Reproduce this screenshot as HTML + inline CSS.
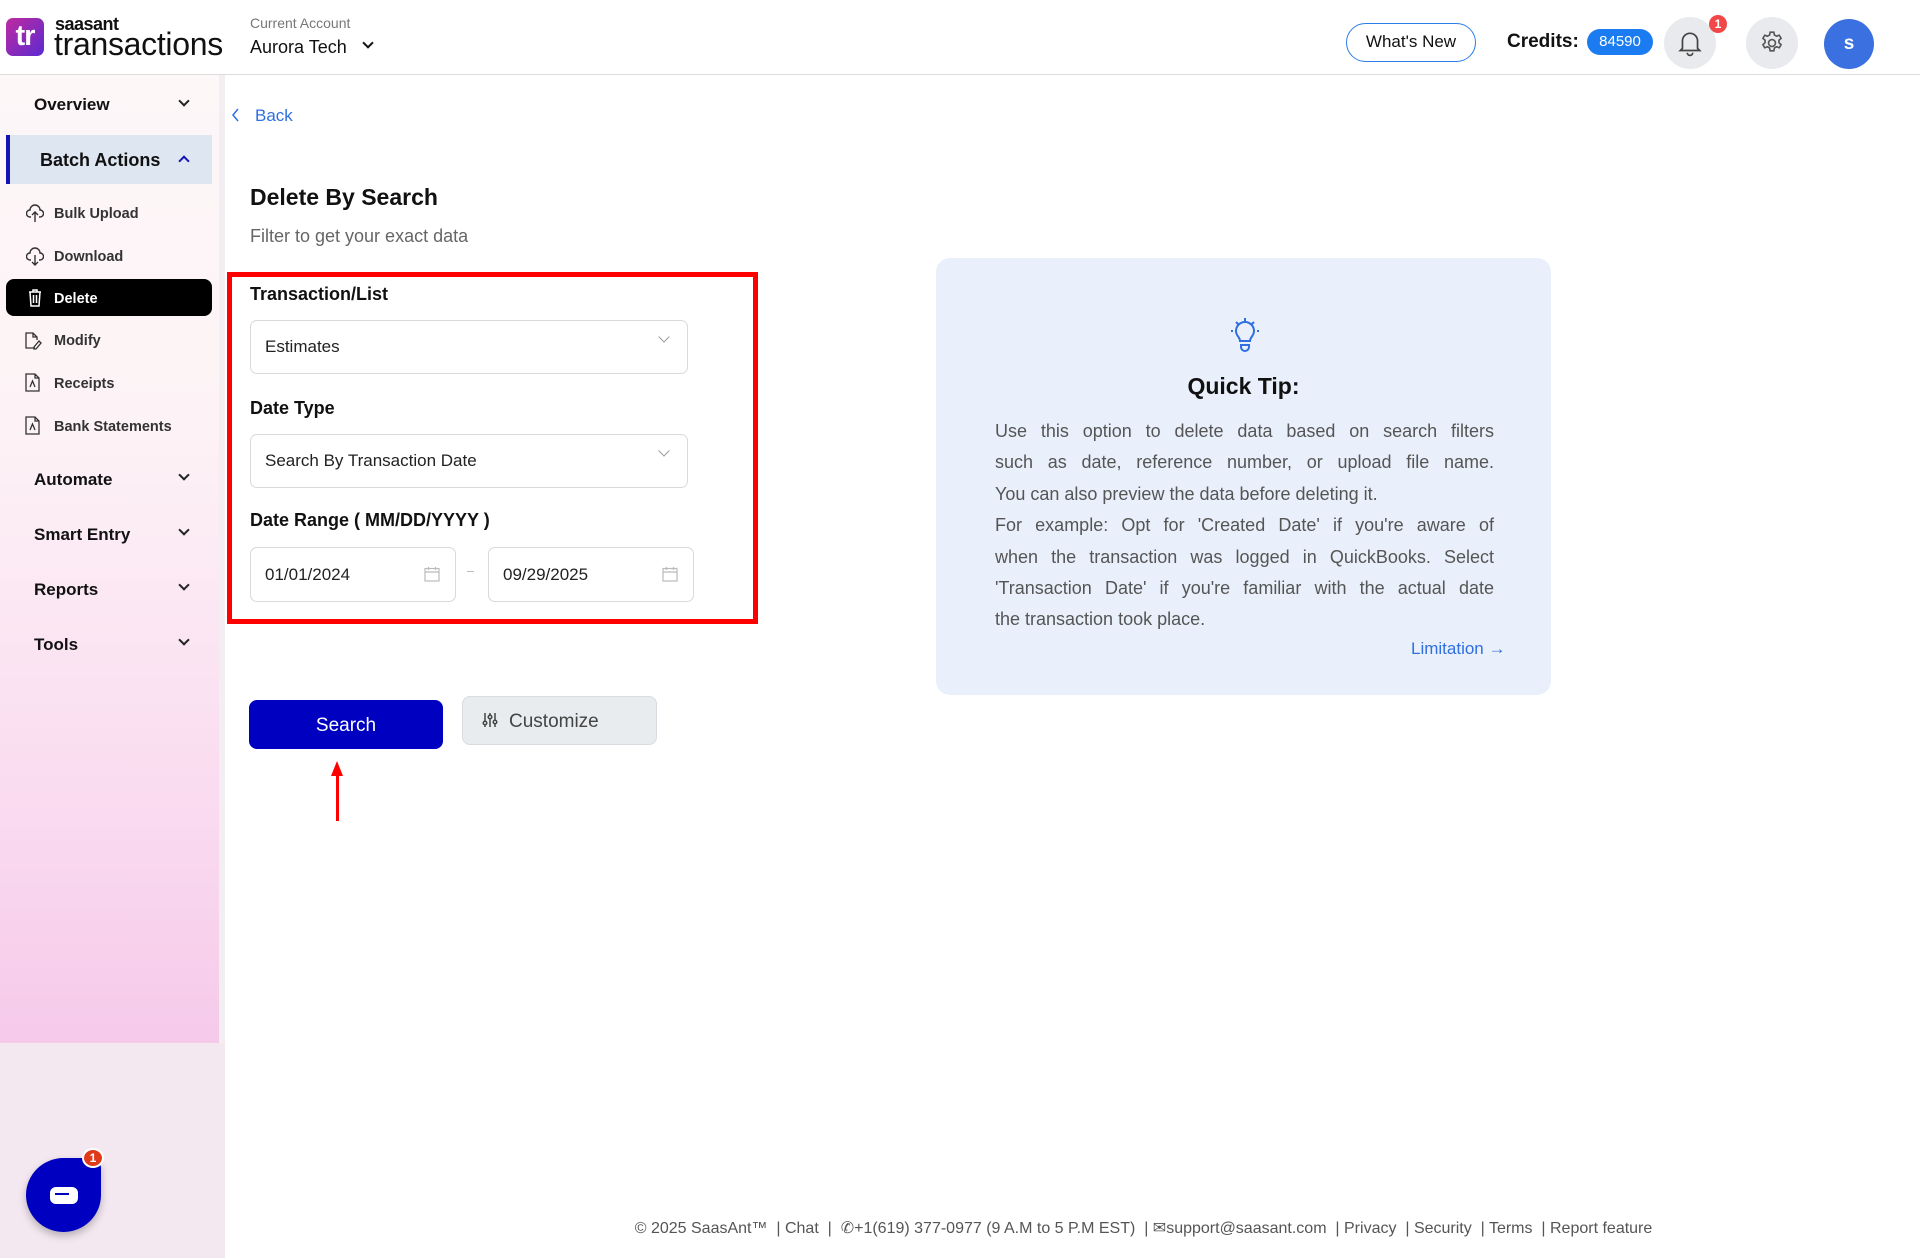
<!DOCTYPE html>
<html><head><meta charset="utf-8"><style>
*{box-sizing:border-box;margin:0;padding:0}
body{width:1920px;height:1258px;position:relative;overflow:hidden;background:#fff;font-family:"Liberation Sans",sans-serif;color:#111}
.a{position:absolute}
.side{left:0;top:75px;width:219px;height:968px;background:linear-gradient(#fdf7f8 0%,#fdf3f6 35%,#f9d8ef 80%,#f6c9ea 100%)}
.side2{left:0;top:1043px;width:225px;height:215px;background:#f4e8f0}
.gap{left:219px;top:75px;width:6px;height:968px;background:#f3eef2}
.nav{font-size:17px;font-weight:bold;color:#111}
.sub{font-size:14.5px;font-weight:bold;color:#333;left:54px}
.chev{width:8px;height:8px;border-right:2px solid #222;border-bottom:2px solid #222;transform:rotate(45deg)}
.lbl{font-size:18px;font-weight:bold;left:250px}
.inp{border:1px solid #d9d9d9;border-radius:7px;background:#fff;font-size:17px;color:#222;padding-left:14px;display:flex;align-items:center}
.tip .ln{font-size:18px;line-height:31.4px;height:31.4px;color:#555;text-align:justify;text-align-last:justify;white-space:nowrap}
.tip .ln.l{text-align-last:left}
</style></head><body>
<div class="a" style="left:0;top:74px;width:1920px;height:1px;background:#dcdcdc"></div>
<div class="a" style="left:6px;top:18px;width:38px;height:38px;border-radius:7px;background:linear-gradient(135deg,#c02aa0,#5a2ad0);color:#fff;font-weight:bold;font-size:29px;line-height:36px;text-align:center;letter-spacing:-1px">tr</div>
<div class="a" style="left:55px;top:14px;font-size:18px;font-weight:bold;color:#111;letter-spacing:-0.5px">saasant</div>
<div class="a" style="left:54px;top:26px;font-size:32px;color:#111;letter-spacing:-0.3px">transactions</div>
<div class="a" style="left:250px;top:15px;font-size:14px;color:#777">Current Account</div>
<div class="a" style="left:250px;top:37px;font-size:18px;color:#111">Aurora Tech</div>
<div class="a chev" style="left:364px;top:39px;border-color:#111"></div>
<div class="a" style="left:1346px;top:23px;width:130px;height:39px;border:1.5px solid #2a7de8;border-radius:20px;font-size:17px;line-height:36px;text-align:center">What's New</div>
<div class="a" style="left:1507px;top:31px;font-size:19px;font-weight:bold">Credits:</div>
<div class="a" style="left:1587px;top:29px;width:66px;height:26px;background:#1a7cf0;border-radius:13px;color:#fff;font-size:15px;line-height:26px;text-align:center">84590</div>
<div class="a" style="left:1664px;top:17px;width:52px;height:52px;border-radius:50%;background:#e8eaed"></div>
<svg class="a" style="left:1677px;top:29px" width="26" height="28" viewBox="0 0 24 26" fill="none" stroke="#444" stroke-width="1.6"><path d="M5 18V11a7 7 0 0 1 14 0v7l2 2H3z M9.5 22a2.5 2.5 0 0 0 5 0"/></svg>
<div class="a" style="left:1709px;top:15px;width:18px;height:18px;border-radius:50%;background:#f04848;color:#fff;font-size:12px;font-weight:bold;line-height:18px;text-align:center">1</div>
<div class="a" style="left:1746px;top:17px;width:52px;height:52px;border-radius:50%;background:#e8eaed"></div>
<svg class="a" style="left:1759px;top:30px" width="26" height="26" viewBox="0 0 24 24" fill="none" stroke="#555" stroke-width="1.5"><circle cx="12" cy="12" r="3.2"/><path d="M10.3 2h3.4l.5 2.6 2 1.1 2.5-.9 1.7 2.9-2 1.8v2.2l2 1.8-1.7 2.9-2.5-.9-2 1.1-.5 2.6h-3.4l-.5-2.6-2-1.1-2.5.9-1.7-2.9 2-1.8v-2.2l-2-1.8 1.7-2.9 2.5.9 2-1.1z"/></svg>
<div class="a" style="left:1824px;top:19px;width:50px;height:50px;border-radius:50%;background:#3a70df;color:#fff;font-size:19px;font-weight:bold;line-height:50px;text-align:center">s</div>
<div class="a side"></div><div class="a side2"></div><div class="a gap"></div>
<div class="a nav" style="left:34px;top:95px">Overview</div><div class="a chev" style="left:180px;top:97px"></div>
<div class="a" style="left:6px;top:135px;width:206px;height:49px;background:#dee6f1;border-left:4px solid #1414b4"></div>
<div class="a nav" style="left:40px;top:150px;font-size:18px">Batch Actions</div>
<div class="a chev" style="left:180px;top:157px;transform:rotate(225deg);border-color:#1414b4"></div>
<div class="a" style="left:6px;top:279px;width:206px;height:37px;background:#000;border-radius:8px"></div>
<svg class="a" style="left:26px;top:203px" width="18" height="20" viewBox="0 0 18 20" fill="none" stroke="#333" stroke-width="1.4"><path d="M5 14H4a3.5 3.5 0 0 1 0-7 5 5 0 0 1 10 0 3.5 3.5 0 0 1 0 7h-1M9 19V9M6 12l3-3 3 3"/></svg>
<div class="a sub" style="top:206px">Bulk Upload</div>
<svg class="a" style="left:26px;top:246px" width="18" height="20" viewBox="0 0 18 20" fill="none" stroke="#333" stroke-width="1.4"><path d="M5 14H4a3.5 3.5 0 0 1 0-7 5 5 0 0 1 10 0 3.5 3.5 0 0 1 0 7h-1M9 9v10M6 16l3 3 3-3"/></svg>
<div class="a sub" style="top:249px">Download</div>
<svg class="a" style="left:27px;top:288px" width="16" height="19" viewBox="0 0 16 19" fill="none" stroke="#fff" stroke-width="1.5"><path d="M2 4h12M6 4V2h4v2M3 4l1 14h8l1-14M6.5 7v8M9.5 7v8"/></svg>
<div class="a sub" style="top:291px;color:#fff">Delete</div>
<svg class="a" style="left:24px;top:331px" width="18" height="19" viewBox="0 0 18 19" fill="none" stroke="#333" stroke-width="1.3"><path d="M11 17H2V2h7l4 4v3M9 2v4h4M10 16l5-6 2 2-5 6h-2z"/></svg>
<div class="a sub" style="top:333px">Modify</div>
<svg class="a" style="left:25px;top:373px" width="15" height="19" viewBox="0 0 15 19" fill="none" stroke="#333" stroke-width="1.3"><path d="M1 1h9l4 4v13H1z M10 1v4h4 M5 14l2.5-6 2.5 6"/></svg>
<div class="a sub" style="top:376px">Receipts</div>
<svg class="a" style="left:25px;top:416px" width="15" height="19" viewBox="0 0 15 19" fill="none" stroke="#333" stroke-width="1.3"><path d="M1 1h9l4 4v13H1z M10 1v4h4 M5 14l2.5-6 2.5 6"/></svg>
<div class="a sub" style="top:419px">Bank Statements</div>
<div class="a nav" style="left:34px;top:470px">Automate</div><div class="a chev" style="left:180px;top:471px"></div>
<div class="a nav" style="left:34px;top:525px">Smart Entry</div><div class="a chev" style="left:180px;top:526px"></div>
<div class="a nav" style="left:34px;top:580px">Reports</div><div class="a chev" style="left:180px;top:581px"></div>
<div class="a nav" style="left:34px;top:635px">Tools</div><div class="a chev" style="left:180px;top:636px"></div>
<div class="a" style="left:26px;top:1158px;width:75px;height:74px;border-radius:50%;background:#0000c0;box-shadow:0 4px 8px rgba(0,0,0,.25);border-top-right-radius:10px"></div>
<div class="a" style="left:50px;top:1187px;width:28px;height:17px;background:#fff;border-radius:6px"></div>
<div class="a" style="left:55px;top:1193px;width:14px;height:2px;background:#0000c0"></div>
<div class="a" style="left:82px;top:1148px;width:22px;height:20px;border-radius:50%;background:#e03a1a;border:2px solid #fff;color:#fff;font-size:12px;font-weight:bold;line-height:16px;text-align:center">1</div>
<svg class="a" style="left:230px;top:107px" width="10" height="16" viewBox="0 0 10 16" fill="none" stroke="#2f6fe0" stroke-width="1.5"><path d="M8 2L3 8l5 6"/></svg>
<div class="a" style="left:255px;top:106px;font-size:17px;color:#2f6fe0">Back</div>
<div class="a" style="left:250px;top:184px;font-size:23px;font-weight:bold">Delete By Search</div>
<div class="a" style="left:250px;top:226px;font-size:18px;color:#666">Filter to get your exact data</div>
<div class="a" style="left:227px;top:272px;width:531px;height:352px;border:5px solid #ff0000"></div>
<div class="a lbl" style="top:284px">Transaction/List</div>
<div class="a inp" style="left:250px;top:320px;width:438px;height:54px">Estimates</div>
<div class="a" style="left:660px;top:333px;width:8px;height:8px;border-right:1px solid #999;border-bottom:1px solid #999;transform:rotate(45deg)"></div>
<div class="a lbl" style="top:398px">Date Type</div>
<div class="a inp" style="left:250px;top:434px;width:438px;height:54px">Search By Transaction Date</div>
<div class="a" style="left:660px;top:447px;width:8px;height:8px;border-right:1px solid #999;border-bottom:1px solid #999;transform:rotate(45deg)"></div>
<div class="a lbl" style="top:510px">Date Range ( MM/DD/YYYY )</div>
<div class="a inp" style="left:250px;top:547px;width:206px;height:55px">01/01/2024</div>
<div class="a inp" style="left:488px;top:547px;width:206px;height:55px">09/29/2025</div>
<svg class="a" style="left:424px;top:566px" width="16" height="16" viewBox="0 0 16 16" fill="none" stroke="#bbb" stroke-width="1.2"><rect x="1" y="2.5" width="14" height="12.5"/><path d="M1 6h14M4.5 1v3M11.5 1v3"/></svg>
<svg class="a" style="left:662px;top:566px" width="16" height="16" viewBox="0 0 16 16" fill="none" stroke="#bbb" stroke-width="1.2"><rect x="1" y="2.5" width="14" height="12.5"/><path d="M1 6h14M4.5 1v3M11.5 1v3"/></svg>
<div class="a" style="left:467px;top:571px;width:7px;height:1px;background:#bbb"></div>
<div class="a" style="left:249px;top:700px;width:194px;height:49px;background:#0000c0;border-radius:8px;color:#fff;font-size:19px;line-height:51px;text-align:center">Search</div>
<div class="a" style="left:462px;top:696px;width:195px;height:49px;background:#e9ecef;border:1px solid #d8dbe0;border-radius:8px;color:#444;font-size:19px;line-height:49px;padding-left:46px">Customize</div>
<svg class="a" style="left:482px;top:712px" width="16" height="16" viewBox="0 0 16 16" fill="none" stroke="#444" stroke-width="1.5"><path d="M3 1v14M8 1v14M13 1v14"/><circle cx="3" cy="11" r="1.8" fill="#e9ecef"/><circle cx="8" cy="5" r="1.8" fill="#e9ecef"/><circle cx="13" cy="10" r="1.8" fill="#e9ecef"/></svg>
<div class="a" style="left:336px;top:774px;width:3px;height:47px;background:#f00"></div>
<div class="a" style="left:331px;top:761px;width:0;height:0;border-left:6px solid transparent;border-right:6px solid transparent;border-bottom:15px solid #f00"></div>
<div class="a tip" style="left:936px;top:258px;width:615px;height:437px;background:#e9f0fb;border-radius:14px">
<svg class="a" style="left:292px;top:58px" width="34" height="36" viewBox="0 0 34 36" fill="none" stroke="#2f6fe0" stroke-width="2"><path d="M17 2v3M8 6l2 2M26 6l-2 2M3 15h2M29 15h2M12 25c0-4-4-5-4-10a9 9 0 0 1 18 0c0 5-4 6-4 10zM13 29h8v2a4 4 0 0 1-8 0z"/></svg>
<div class="a" style="left:0;top:115px;width:615px;text-align:center;font-size:23px;font-weight:bold;color:#111">Quick Tip:</div>
<div class="a" style="left:59px;top:158px;width:499px">
<div class="ln">Use this option to delete data based on search filters</div>
<div class="ln">such as date, reference number, or upload file name.</div>
<div class="ln l">You can also preview the data before deleting it.</div>
<div class="ln">For example: Opt for 'Created Date' if you're aware of</div>
<div class="ln">when the transaction was logged in QuickBooks. Select</div>
<div class="ln">'Transaction Date' if you're familiar with the actual date</div>
<div class="ln l">the transaction took place.</div>
</div>
<div class="a" style="left:475px;top:381px;font-size:17px;color:#2f6fe0">Limitation →</div>
</div>
<div class="a" style="left:600px;top:1218px;width:1087px;text-align:center;font-size:16px;color:#555;white-space:nowrap">© 2025 SaasAnt™ &nbsp;| Chat &nbsp;| &nbsp;✆+1(619) 377-0977 (9 A.M to 5 P.M EST) &nbsp;| ✉support@saasant.com &nbsp;| Privacy &nbsp;| Security &nbsp;| Terms &nbsp;| Report feature</div>
</body></html>
